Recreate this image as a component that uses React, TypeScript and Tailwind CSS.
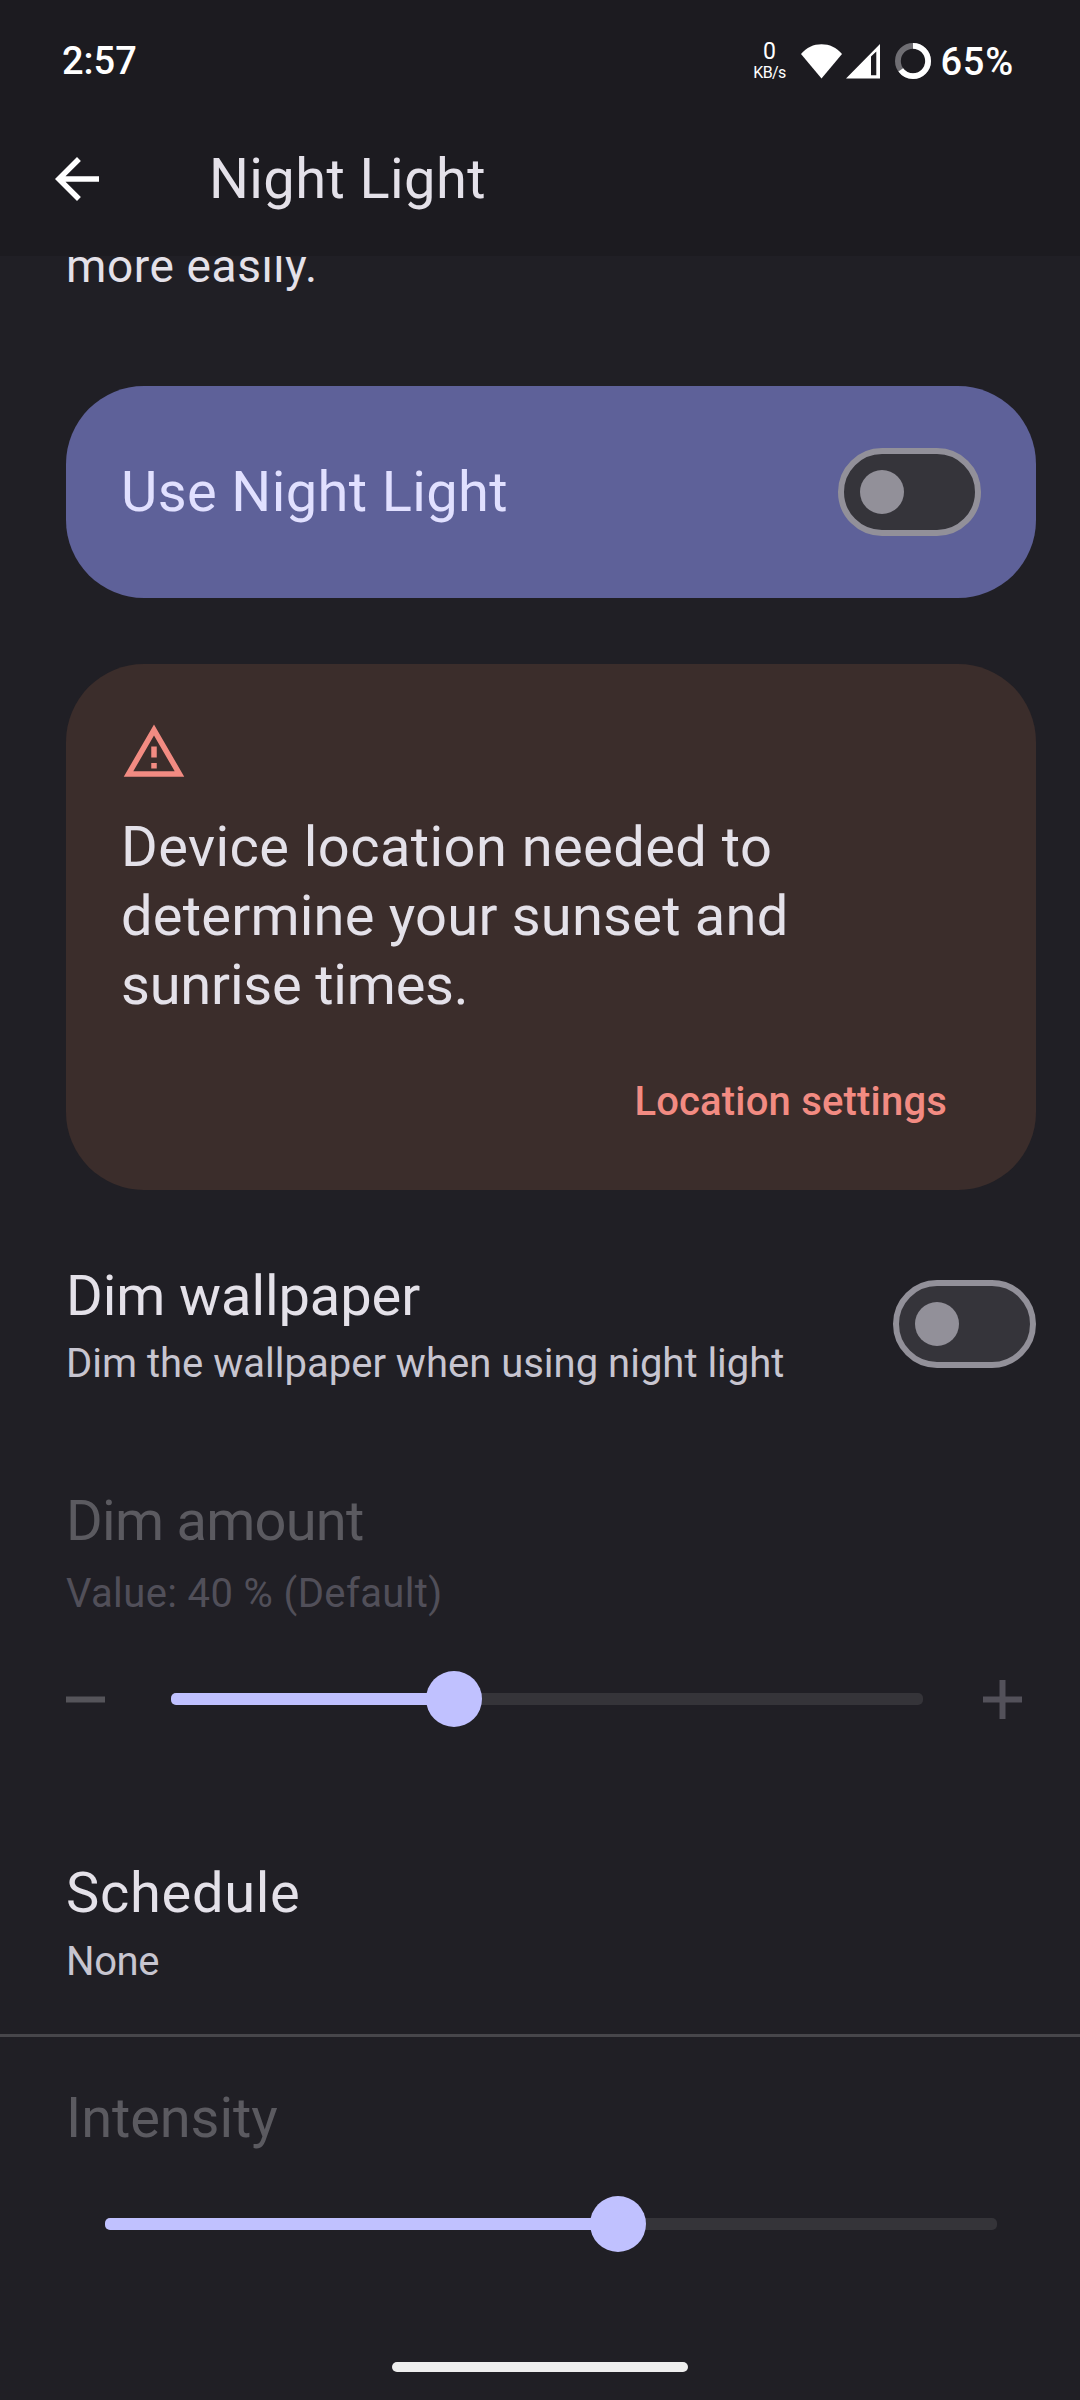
import React, { useState } from "react";
import clsx from "clsx";

const StatusBar = () => {
  return (
    <div className="h-[122px] flex items-center justify-between pl-[62px] pr-[66px] text-white">
      <span className="text-[38px] leading-[46px] font-medium">2:57</span>
      <div className="flex items-center">
        <div className="flex flex-col items-center w-[36px] mr-[14px]">
          <span className="text-[23px] leading-[24px]">0</span>
          <span className="text-[16px] leading-[18px] tracking-[-0.6px]">KB/s</span>
        </div>
        {/* wifi */}
        <svg className="w-[41px] h-[35px] mr-1" viewBox="0 0 41 35" fill="#fff">
          <path d="M20.5 34.5 0 10C5.500 3.500 12.500 0.300 20.500 0.300S35.500 3.500 41 10Z" />
        </svg>
        {/* signal */}
        <svg className="w-[34px] h-[35px] mr-[15px]" viewBox="0 0 34 35" fill="#fff" fillRule="evenodd">
          <path d="M34 0V34.500H0ZM25 12.500V31.200H30.300V7.500Z" />
        </svg>
        {/* battery ring */}
        <svg className="w-[36px] h-[36px] mr-[9px]" viewBox="0 0 36 36" fill="none" strokeWidth="5.8">
          <circle cx="18" cy="18" r="15.1" stroke="#6f6e73" />
          <circle cx="18" cy="18" r="15.1" stroke="#fff" pathLength="100" strokeDasharray="65 35" transform="rotate(-90 18 18)" />
        </svg>
        <span className="pt-0.5 text-[38px] leading-[46px] font-medium tracking-[0.8px]">65%</span>
      </div>
    </div>
  )
}

const Header = () => {
  return (
    <header className="h-[256px] bg-[#1c1b20]">
      <StatusBar />
      <div className="h-[114px] flex items-center pl-[44px]">
        <button className="cursor-pointer">
          <svg className="w-[66px] h-[66px]" viewBox="0 0 24 24" fill="#fff">
            <path d="M20 11H7.830l5.590-5.590L12 4l-8 8 8 8 1.410-1.410L7.830 13H20v-2z" />
          </svg>
        </button>
        <h1 className="ml-[99px] text-[56px] leading-[66px] tracking-[0.4px] text-[#e4e1e9]">Night Light</h1>
      </div>
    </header>
  )
}

const Toggle = ({ className }: { className?: string }) => {
  const [on, setOn] = useState(false)

  return (
    <button
      onClick={() => setOn(prev => !prev)}
      className={clsx(
        "w-[143px] h-[88px] shrink-0 rounded-full border-[6px] border-[#929099] bg-[#35343a] flex items-center px-4 cursor-pointer",
        on && "justify-end",
        className
      )}
    >
      <span className="w-[44px] h-[44px] rounded-full bg-[#929099]" />
    </button>
  )
}

const Slider = ({ value, className }: { value: number, className?: string }) => {
  return (
    <div className={clsx("relative h-[56px] flex items-center", className)}>
      <div className="w-full h-3 rounded-[5px] bg-[#353439] overflow-hidden">
        <div className="h-full bg-[#c0c1ff]" style={{ width: `${value}%` }} />
      </div>
      <div
        className="absolute top-0 w-[56px] h-[56px] -ml-[28px] rounded-full bg-[#c0c1ff]"
        style={{ left: `${value}%` }}
      />
    </div>
  )
}

const App = () => {
  return (
    <div className="w-[1080px] h-[2400px] overflow-hidden bg-[#201f25] font-['Roboto',sans-serif] text-[#e4e1e9]">
      <Header />

      <main className="h-[2144px] overflow-hidden">
        <div className="pl-[66px] pr-[44px]">
          <p className="-mt-5 text-[46px] leading-[60px] tracking-[0.6px]">more easily.</p>

          <div className="mt-[90px] h-[212px] rounded-[78px] bg-[#5e6199] flex items-center justify-between px-[55px]">
            <span className="text-[56px] leading-[66px] tracking-[0.38px] text-[#e1e0ff]">Use Night Light</span>
            <Toggle />
          </div>

          <div className="mt-[66px] h-[526px] rounded-[78px] bg-[#3b2d2b] pt-[55px] pl-[55px]">
            <svg className="w-[66px] h-[66px]" viewBox="0 0 24 24" fill="#f28b82">
              <path d="M12 5.990 19.530 19H4.470L12 5.990M12 2 1 21h22L12 2zm1 14h-2v2h2v-2zm0-6h-2v4h2v-4z" />
            </svg>
            <p className="mt-[28px] text-[56px] leading-[69px]">
              <span className="block tracking-[0.43px]">Device location needed to</span>
              <span className="block tracking-[0.23px]">determine your sunset and</span>
              <span className="block tracking-[-0.2px]">sunrise times.</span>
            </p>
            <div className="mt-[59px] pr-[89px] flex justify-end">
              <button className="text-[40px] leading-[46px] font-medium tracking-[0.18px] text-[#f28b82] cursor-pointer">
                Location settings
              </button>
            </div>
          </div>

          <div className="mt-[73px] flex items-start justify-between">
            <div>
              <h2 className="text-[56px] leading-[66px] tracking-[-0.08px]">Dim wallpaper</h2>
              <p className="mt-3 text-[40px] leading-[46px] text-[#c7c5d0]">
                Dim the wallpaper when using night light
              </p>
            </div>
            <Toggle className="mt-[17px]" />
          </div>

          <h2 className="mt-[101px] text-[56px] leading-[66px] tracking-[-0.74px] text-[#5b5a60]">Dim amount</h2>
          <p className="mt-[17px] text-[40px] leading-[46px] tracking-[0.38px] text-[#514f59]">Value: 40 % (Default)</p>

          <div className="mt-[54px] h-[56px] flex items-center">
            <svg className="w-[39px] h-[39px]" viewBox="0 0 39 39" stroke="#55545a" strokeWidth="6">
              <path d="M0 19.500h39" />
            </svg>
            <Slider value={37.6} className="w-[752px] ml-[66px]" />
            <svg className="w-[39px] h-[39px] ml-[60px]" viewBox="0 0 39 39" stroke="#53515a" strokeWidth="6">
              <path d="M0 19.500h39M19.500 0v39" />
            </svg>
          </div>

          <h2 className="mt-[133px] text-[56px] leading-[66px] tracking-[0.7px]">Schedule</h2>
          <p className="mt-[13px] text-[40px] leading-[46px] tracking-[-0.4px] text-[#c7c5d0]">None</p>
        </div>

        <div className="mt-[49px] h-[3px] bg-[#47464b]" />

        <div className="pl-[66px] pr-[44px]">
          <h2 className="mt-[48px] text-[56px] leading-[66px] tracking-[-0.1px] text-[#5b5a60]">Intensity</h2>
          <Slider value={57.5} className="mt-[45px] mx-[39px]" />
        </div>

        {/* gesture bar */}
        <div className="mt-[110px] mx-auto w-[296px] h-[10px] rounded-full bg-[#eeeeee]" />
      </main>
    </div>
  )
}

export default App
